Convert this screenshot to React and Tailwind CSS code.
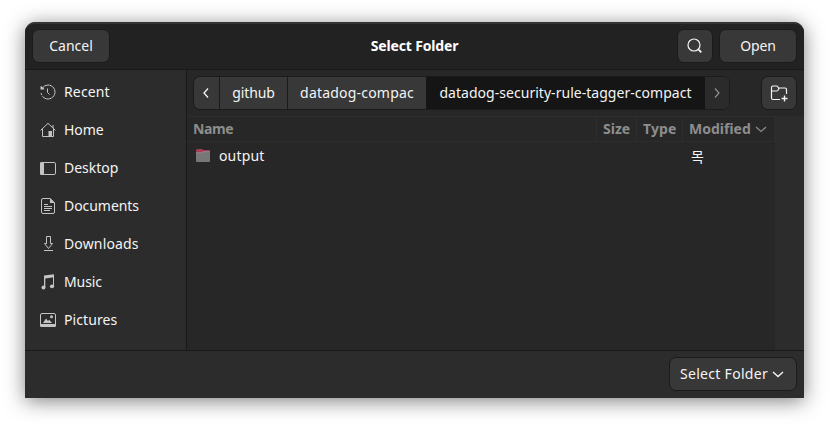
import React from 'react';

function Icon({ children, className = '' }) {
  return (
    <svg viewBox="0 0 16 16" fill="none" stroke="currentColor" strokeWidth="1" className={`h-4 w-4 shrink-0 ${className}`}>
      {children}
    </svg>
  );
}

const places = [
  {
    name: 'Recent',
    tracking: 'tracking-[0.15px]',
    icon: (
      <>
        <path d="M2.500 4A7 7 0 0 1 8 1A7 7 0 1 1 3.500 13.360" />
        <path d="M3.500 13.360A7 7 0 0 1 1 8" strokeDasharray="2 1" />
        <path d="M.5 2.300h1.200L4.200 4.800V5.500H.5z" fill="currentColor" stroke="none" />
        <path d="M7.500 4.500v4l2 2" />
      </>
    ),
  },
  {
    name: 'Home',
    tracking: 'tracking-[-0.1px]',
    icon: (
      <>
        <path d="M.6 8.400 8 1.300l7.400 7.100M13 3v3M2.500 7v7.500h11V7" />
        <path d="M8.500 9H12v5.500H8.500z" fill="currentColor" stroke="none" />
      </>
    ),
  },
  {
    name: 'Desktop',
    tracking: 'tracking-[0px]',
    icon: (
      <>
        <rect x=".5" y="2.500" width="15" height="12" rx="1.300" />
        <path d="M1.500 2H4v13H1.500Q0 15 0 13.500v-10Q0 2 1.500 2z" fill="currentColor" stroke="none" />
      </>
    ),
  },
  {
    name: 'Documents',
    tracking: 'tracking-[-0.05px]',
    icon: (
      <>
        <path d="M3 .5h7L14.500 5v9q0 1.500-1.500 1.500H3Q1.500 15.500 1.500 14V2Q1.500.5 3 .5z" />
        <path d="M10 0l5 5h-5z" fill="currentColor" stroke="none" />
        <path d="M4 6.500h4M4 8.500h8M4 10.500h8M4 12.500h6" />
      </>
    ),
  },
  {
    name: 'Downloads',
    tracking: 'tracking-[0.15px]',
    icon: <path d="M6.500.5h4V7.500h2l-4 5-4-5h2zM4 14.500h9" />,
  },
  {
    name: 'Music',
    tracking: 'tracking-[-0.1px]',
    icon: (
      <>
        <path d="M4 1.600 14 .3v3L5.300 4.400V13H4z" fill="currentColor" stroke="none" />
        <path d="M13.500 2v10" />
        <ellipse cx="3.500" cy="13.500" rx="2" ry="1.900" fill="currentColor" stroke="none" />
        <ellipse cx="12" cy="12.300" rx="2.100" ry="1.900" fill="currentColor" stroke="none" />
      </>
    ),
  },
  {
    name: 'Pictures',
    tracking: 'tracking-[0.1px]',
    icon: (
      <>
        <rect x=".5" y="1.500" width="15" height="13" rx="1.500" />
        <path d="M0 12h16v1.500q0 1.500-1.500 1.500h-13Q0 15 0 13.500zM3 11l3-4.500 2 2.500 1.200-1.200L12 11z" fill="currentColor" stroke="none" />
        <circle cx="11.500" cy="4.800" r="1.500" fill="currentColor" stroke="none" />
      </>
    ),
  },
];

const button = 'flex h-[34px] items-center justify-center rounded-[7px] border border-[#1b1b1b] bg-[#383838]';

function Header() {
  return (
    <header className="flex h-12 shrink-0 items-start rounded-t-[10px] border-t-2 border-b border-t-[#343434] border-b-[#191919] bg-[#222222] px-[7px] pt-[5px]">
      <div className="flex flex-1">
        <button className={`${button} w-[78px] tracking-[0px]`}>Cancel</button>
      </div>
      <h1 className="flex h-[34px] items-center text-[14px] font-bold tracking-[-0.15px] text-white">Select Folder</h1>
      <div className="flex flex-1 justify-end gap-1.5">
        <button className={`${button} w-9`} aria-label="Search">
          <Icon>
            <circle cx="7" cy="7" r="6" strokeWidth="1.200" />
            <path d="m11.300 11.300 3 3" strokeWidth="1.800" />
          </Icon>
        </button>
        <button className={`${button} w-[78px] tracking-[-0.1px]`}>Open</button>
      </div>
    </header>
  );
}

function Sidebar() {
  return (
    <nav className="flex w-[162px] shrink-0 flex-col border-r border-[#191919] pt-[3px]">
      {places.map((place) => (
        <a key={place.name} className="flex h-[38px] items-center gap-2 pl-[15px]">
          <Icon className="text-[#c4c4c4]">{place.icon}</Icon>
          <span className={place.tracking}>{place.name}</span>
        </a>
      ))}
    </nav>
  );
}

function PathBar() {
  return (
    <div className="flex h-[46px] items-center justify-between pr-[7px] pl-1.5">
      <div className="flex h-[34px] w-[537px] overflow-hidden rounded-[7px] border border-[#1b1b1b] bg-[#383838]">
        <button className="flex w-[26px] items-center justify-center border-r border-[#1b1b1b] pr-0.5" aria-label="Back">
          <Icon><path d="M10 3.500 6 8l4 4.500" strokeWidth="1.300" /></Icon>
        </button>
        <button className="w-[68px] border-r border-[#1b1b1b] tracking-[-0.15px]">github</button>
        <button className="w-[138px] tracking-[0.2px]">datadog-compac</button>
        <button className="w-[279px] bg-[#151515] tracking-[0.03px]">datadog-security-rule-tagger-compact</button>
        <button className="flex flex-1 items-center justify-center bg-[#2b2b2b] text-[#8f8f8f]" aria-label="Forward">
          <Icon><path d="m6 3.500 4 4.500-4 4.500" strokeWidth="1.200" /></Icon>
        </button>
      </div>
      <button className={`${button} w-9`} aria-label="Create folder">
        <svg viewBox="0 0 18 18" fill="none" stroke="currentColor" strokeWidth="1.200" className="h-[18px] w-[18px]">
          <path d="M10 15.500H3q-1.500 0-1.500-1.500V3.500Q1.500 2 3 2h3.800q.7 0 1 .7L8.500 4H15q1.500 0 1.500 1.500V10M1.500 7h5q1 0 1.500-.8L9.200 4" />
          <path d="M14.500 11.500v6M11.500 14.500h6" strokeWidth="1.400" />
        </svg>
      </button>
    </div>
  );
}

function FileList() {
  return (
    <div className="flex min-h-0 flex-1">
      <div className="w-[588px]">
        <div className="flex h-[26px] items-center border-y border-[#2d2d2d] text-[14px] font-bold text-[#8d8d8d]">
          <span className="flex h-full w-[410px] items-center border-r border-[#2d2d2d] pl-1.5 tracking-[-0.4px]">Name</span>
          <span className="flex h-full w-10 items-center border-r border-[#2d2d2d] pl-1.5 tracking-[0px]">Size</span>
          <span className="flex h-full w-[46px] items-center border-r border-[#2d2d2d] pl-1.5 tracking-[0.1px]">Type</span>
          <span className="flex h-full flex-1 items-center border-r border-[#2d2d2d] pl-1.5">
            <span className="w-16 tracking-[0px]">Modified</span>
            <Icon><path d="m3 6 5 4.500L13 6" strokeWidth="1.200" /></Icon>
          </span>
        </div>
        <div className="flex h-7 items-center pl-2">
          <svg viewBox="0 0 16 16" className="h-4 w-4 shrink-0">
            <path d="M1 4V2.500Q1 1 2.500 1H7l1.500 1H14q1 0 1 1v3H1z" fill="#a83a52" />
            <path d="M1 4.500h5.500L8 3.500h7V13q0 1-1 1H2q-1 0-1-1z" fill="#777777" />
            <path d="M1 4.700h5.500L8 3.700h7" fill="none" stroke="#a49ba0" strokeWidth=".6" />
          </svg>
          <span className="w-[480px] shrink-0 pl-2 tracking-[0.15px]">output</span>
          <span className="pt-0.5">목</span>
        </div>
      </div>
      <div className="flex-1 bg-[#2c2c2c]" />
    </div>
  );
}

export default function App() {
  return (
    <main className="h-[426px] w-[829px] overflow-hidden bg-white px-[25px] pt-[22px] font-['Noto_Sans','Noto_Sans_CJK_KR',sans-serif] text-[14px] leading-5 text-[#f4f4f4]">
      <section className="flex h-[376px] w-[779px] flex-col rounded-t-[11px] bg-[#2c2c2c] shadow-[0_3px_20px_rgba(0,0,0,0.5)]">
        <Header />
        <div className="flex min-h-0 flex-1">
          <Sidebar />
          <div className="flex min-w-0 flex-1 flex-col bg-[#272727]">
            <PathBar />
            <FileList />
          </div>
        </div>
        <footer className="flex h-12 shrink-0 items-start justify-end border-t border-[#191919] pt-1.5 pr-[7px]">
          <button className={`${button} w-32 gap-0.5`}>
            <span className="tracking-[0.3px]">Select Folder</span>
            <Icon><path d="m3 6 5 4.500L13 6" strokeWidth="1.400" /></Icon>
          </button>
        </footer>
      </section>
    </main>
  );
}
